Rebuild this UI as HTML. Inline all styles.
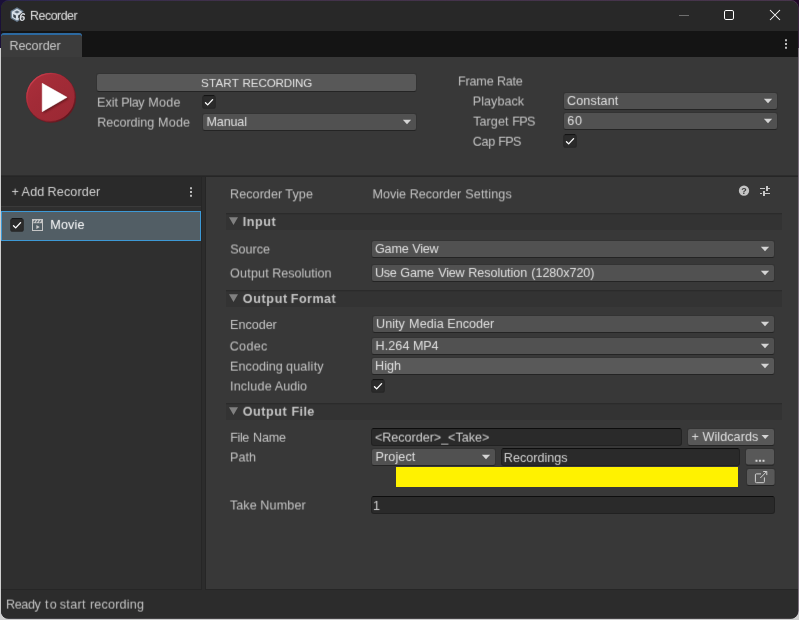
<!DOCTYPE html>
<html lang="en">
<head>
<meta charset="utf-8">
<title>Recorder</title>
<style>
html,body{margin:0;padding:0;width:799px;height:620px;overflow:hidden;}
body{width:799px;height:620px;overflow:hidden;position:relative;background:#c9c9c9;font-family:"Liberation Sans",sans-serif;}
#root{position:absolute;left:0;top:0;width:799px;height:620px;overflow:hidden;}
#gfx{position:absolute;left:0;top:0;width:799px;height:620px;display:block;will-change:transform;}
#txt{position:absolute;left:0;top:0;width:799px;height:620px;will-change:transform;}
.tg{position:absolute;left:0;top:0;width:799px;height:620px;}
#flt{position:absolute;left:0;top:0;width:0;height:0;}
.t{position:absolute;white-space:pre;line-height:20px;height:20px;font-size:12.6px;}

</style>
</head>
<body>
<div id="root">
<svg id="flt" width="0" height="0" aria-hidden="true"><defs>
<filter id="fm500" x="0" y="0" width="100%" height="100%" color-interpolation-filters="sRGB"><feConvolveMatrix order="3" kernelMatrix="0.0400 0.4200 0.0400 0.0400 0.4200 0.0400 0.0000 0.0000 0.0000" divisor="1" preserveAlpha="false" edgeMode="none"/></filter>
<filter id="fm375" x="0" y="0" width="100%" height="100%" color-interpolation-filters="sRGB"><feConvolveMatrix order="3" kernelMatrix="0.0300 0.3150 0.0300 0.0500 0.5250 0.0500 0.0000 0.0000 0.0000" divisor="1" preserveAlpha="false" edgeMode="none"/></filter>
<filter id="fm250" x="0" y="0" width="100%" height="100%" color-interpolation-filters="sRGB"><feConvolveMatrix order="3" kernelMatrix="0.0200 0.2100 0.0200 0.0600 0.6300 0.0600 0.0000 0.0000 0.0000" divisor="1" preserveAlpha="false" edgeMode="none"/></filter>
<filter id="fm125" x="0" y="0" width="100%" height="100%" color-interpolation-filters="sRGB"><feConvolveMatrix order="3" kernelMatrix="0.0120 0.1263 0.0120 0.0660 0.6925 0.0660 0.0020 0.0213 0.0020" divisor="1" preserveAlpha="false" edgeMode="none"/></filter>
<filter id="f0" x="0" y="0" width="100%" height="100%" color-interpolation-filters="sRGB"><feConvolveMatrix order="3" kernelMatrix="0.0064 0.0672 0.0064 0.0672 0.7056 0.0672 0.0064 0.0672 0.0064" divisor="1" preserveAlpha="false" edgeMode="none"/></filter>
<filter id="f375" x="0" y="0" width="100%" height="100%" color-interpolation-filters="sRGB"><feConvolveMatrix order="3" kernelMatrix="0.0000 0.0000 0.0000 0.0500 0.5250 0.0500 0.0300 0.3150 0.0300" divisor="1" preserveAlpha="false" edgeMode="none"/></filter>
</defs></svg>
<svg id="gfx" width="799" height="620" viewBox="0 0 799 620">
<defs>
<clipPath id="wc"><rect x="1.0" y="1.0" width="797" height="617.6" rx="7.5"/></clipPath>
<linearGradient id="pg" x1="0" y1="0" x2="1" y2="1"><stop offset="0" stop-color="#ac2f3b"/><stop offset="0.4" stop-color="#a22b37"/><stop offset="1" stop-color="#9a2833"/></linearGradient>
<linearGradient id="ring" x1="0.15" y1="0.15" x2="0.85" y2="0.85"><stop offset="0" stop-color="#cc3e4e" stop-opacity="0.9"/><stop offset="0.45" stop-color="#b03040" stop-opacity="0"/><stop offset="1" stop-color="#5e161d" stop-opacity="0.9"/></linearGradient>
<linearGradient id="bgt" x1="0" y1="0" x2="1" y2="0"><stop offset="0" stop-color="#1a1038"/><stop offset="0.25" stop-color="#1d0a2a"/><stop offset="1" stop-color="#220828"/></linearGradient>
<linearGradient id="bdr" x1="0" y1="0" x2="1" y2="0"><stop offset="0" stop-color="#2e2a52"/><stop offset="0.3" stop-color="#46364e"/><stop offset="1" stop-color="#4c3a50"/></linearGradient>
<filter id="ts" x="-30%" y="-30%" width="160%" height="160%"><feGaussianBlur stdDeviation="1.2"/></filter>
</defs>
<g>
<rect x="0" y="0" width="799" height="620" fill="#cfcfcf"/>
<rect x="0" y="0" width="799" height="48" fill="url(#bgt)"/>
<rect x="1.0" y="0.09999999999999998" width="797.7" height="618.5" rx="8" fill="url(#bdr)" opacity="0.9"/>
<g clip-path="url(#wc)">
<rect x="0" y="0" width="799" height="620" fill="#2c2c2c"/>
<rect x="0" y="0" width="799" height="31" fill="#282828"/>
<rect x="0" y="31" width="799" height="26" fill="#141414"/>
<path d="M1 57 V36 a3 3 0 0 1 3 -3 H79 a3 3 0 0 1 3 3 V57 z" fill="#3c3c3c"/>
<path d="M1 36.4 V36 a3 3 0 0 1 3 -3 H79 a3 3 0 0 1 3 3 V36.4 L80.6 34.9 H2.4 z" fill="#2c69a0"/>
<rect x="0" y="57" width="799" height="118" fill="#383838"/>
<rect x="0" y="177" width="201" height="29" fill="#2a2a2a"/>
<rect x="0" y="206" width="201" height="1" fill="#3a3a3a"/>
<rect x="0" y="207" width="201" height="382" fill="#2f2f2f"/>
<rect x="206" y="177" width="600" height="412" fill="#383838"/>
<rect x="0" y="589" width="799" height="31" fill="#2c2c2c"/>
<rect x="201" y="177" width="1" height="412" fill="#262626"/>
<rect x="205" y="177" width="1" height="412" fill="#262626"/>
<rect x="0" y="589" width="202" height="1" fill="#262626"/>
<rect x="205" y="589" width="600" height="1" fill="#262626"/>
<rect x="0" y="176" width="799" height="1" fill="#262626"/>
<rect x="1" y="211" width="200" height="30" fill="#3d99d6"/>
<rect x="2" y="212" width="198" height="28" fill="#525e65"/>
</g>
<rect x="679" y="15" width="10" height="1" fill="#6e6e6e"/>
<rect x="724.5" y="10.5" width="9" height="9" rx="1.4" fill="none" stroke="#ffffff" stroke-width="1"/>
<path d="M770 10 L780 20 M780 10 L770 20" fill="none" stroke="#ffffff" stroke-width="1.05"/>
<rect x="785" y="39.25" width="2" height="2" fill="#bcbcbc"/>
<rect x="785" y="43" width="2" height="2" fill="#bcbcbc"/>
<rect x="785" y="46.75" width="2" height="2" fill="#bcbcbc"/>
<rect x="190" y="187.25" width="2" height="2" fill="#bcbcbc"/>
<rect x="190" y="191" width="2" height="2" fill="#bcbcbc"/>
<rect x="190" y="194.75" width="2" height="2" fill="#bcbcbc"/>
<g>
<path d="M17 7.2 L23.4 10.9 V18.3 L17 22 L10.6 18.3 V10.9 Z" fill="#66788a"/>
<path d="M17 8.7 L22.1 11.7 V17.6 L17 20.5 L11.9 17.6 V11.7 Z" fill="#d6dee8"/>
<path d="M17 10.4 L19.8 12 L17 13.6 L14.2 12 Z" fill="#5d6c7a"/>
<path d="M13.3 14.1 L15.9 15.6 V18.4 L13.3 16.9 Z" fill="#39424b"/>
<path d="M20.7 14.1 L18.1 15.6 V18.4 L20.7 16.9 Z" fill="#39424b"/>
<text x="19.3" y="21.1" font-family="Liberation Sans, sans-serif" font-weight="700" font-style="italic" font-size="10.6" fill="#dcdfe4" stroke="#262626" stroke-width="1.3" paint-order="stroke" stroke-linejoin="round">6</text>
</g>
<circle cx="51.1" cy="97.8" r="24.9" fill="#6a1a22"/>
<circle cx="50.7" cy="97.3" r="24.4" fill="url(#pg)"/>
<circle cx="50.9" cy="97.5" r="24.1" fill="none" stroke="url(#ring)" stroke-width="1.3"/>
<path d="M43.4 85 L68.4 98.6 L43.4 113.2 Z" fill="#3a0a10" opacity="0.6" filter="url(#ts)"/>
<path d="M42.2 83.3 L67.1 97.3 L42.2 111.7 Z" fill="#ffffff" stroke="#ffffff" stroke-width="0.5" stroke-linejoin="round"/>
<rect x="96" y="73" width="321" height="19" rx="3" fill="#333333"/>
<rect x="97.6" y="91" width="317.8" height="1" fill="#242424"/>
<rect x="97" y="74" width="319" height="17" rx="2" fill="#585858"/>
<rect x="202.2" y="95.2" width="13.6" height="13.6" rx="2.6" fill="#262626"/>
<rect x="203.8" y="95.2" width="10.4" height="1" fill="#101010"/>
<rect x="203.2" y="96.2" width="11.6" height="11.6" rx="1.6" fill="#2b2b2b"/>
<path d="M205.50 102.70 L207.67 104.87 L212.57 99.62" fill="none" stroke="#ffffff" stroke-width="1.35" stroke-linecap="round" stroke-linejoin="round"/>
<rect x="202" y="113" width="215" height="18" rx="3" fill="#333333"/>
<rect x="203.6" y="130" width="211.8" height="1" fill="#242424"/>
<rect x="203" y="114" width="213" height="16" rx="2" fill="#515151"/>
<path d="M402.85 119.8 h8.3 L407 124.2 z" fill="#d4d4d4"/>
<rect x="563" y="92" width="215" height="18" rx="3" fill="#333333"/>
<rect x="564.6" y="109" width="211.8" height="1" fill="#242424"/>
<rect x="564" y="93" width="213" height="16" rx="2" fill="#515151"/>
<path d="M763.85 98.8 h8.3 L768 103.2 z" fill="#d4d4d4"/>
<rect x="563" y="112" width="215" height="18" rx="3" fill="#333333"/>
<rect x="564.6" y="129" width="211.8" height="1" fill="#242424"/>
<rect x="564" y="113" width="213" height="16" rx="2" fill="#515151"/>
<path d="M763.85 118.8 h8.3 L768 123.2 z" fill="#d4d4d4"/>
<rect x="563.2" y="134.2" width="13.6" height="13.6" rx="2.6" fill="#262626"/>
<rect x="564.8" y="134.2" width="10.4" height="1" fill="#101010"/>
<rect x="564.2" y="135.2" width="11.6" height="11.6" rx="1.6" fill="#2b2b2b"/>
<path d="M566.50 141.70 L568.67 143.87 L573.57 138.62" fill="none" stroke="#ffffff" stroke-width="1.35" stroke-linecap="round" stroke-linejoin="round"/>
<rect x="10.2" y="218.2" width="13.6" height="13.6" rx="2.6" fill="#262626"/>
<rect x="11.8" y="218.2" width="10.4" height="1" fill="#101010"/>
<rect x="11.2" y="219.2" width="11.6" height="11.6" rx="1.6" fill="#2b2b2b"/>
<path d="M13.50 225.70 L15.67 227.87 L20.57 222.62" fill="none" stroke="#ffffff" stroke-width="1.35" stroke-linecap="round" stroke-linejoin="round"/>
<rect x="32.5" y="219.5" width="10" height="11" fill="none" stroke="#c6c6c6" stroke-width="1"/>
<rect x="32" y="219" width="11" height="4.2" fill="#c6c6c6"/>
<path d="M33.4 222.3 L35.2 220.3 M36.3 222.3 L38.1 220.3 M39.2 222.3 L41 220.3" fill="none" stroke="#56626a" stroke-width="1.1"/>
<path d="M36.4 225.1 L39.7 227 L36.4 228.9 Z" fill="#cacaca"/>
<circle cx="744" cy="190.65" r="5.15" fill="#c4c4c4"/>
<text x="744" y="194" text-anchor="middle" font-family="Liberation Sans, sans-serif" font-weight="700" font-size="9" fill="#383838">?</text>
<rect x="760" y="188" width="5" height="1" fill="#c8c8c8"/>
<rect x="766" y="186" width="2" height="5" fill="#c8c8c8"/>
<rect x="768" y="188" width="2" height="1" fill="#c8c8c8"/>
<rect x="760" y="193" width="2" height="1" fill="#c8c8c8"/>
<rect x="763" y="191" width="2" height="5" fill="#c8c8c8"/>
<rect x="765" y="193" width="5" height="1" fill="#c8c8c8"/>
<rect x="226" y="213.2" width="556" height="16.8" fill="#333333"/>
<rect x="226" y="213.2" width="556" height="1" fill="#2a2a2a"/>
<path d="M229 217.2 H238 L233.5 224.9 z" fill="#808080"/>
<rect x="226" y="290.2" width="556" height="16.8" fill="#333333"/>
<rect x="226" y="290.2" width="556" height="1" fill="#2a2a2a"/>
<path d="M229 294.2 H238 L233.5 301.9 z" fill="#808080"/>
<rect x="226" y="403.2" width="556" height="16.8" fill="#333333"/>
<rect x="226" y="403.2" width="556" height="1" fill="#2a2a2a"/>
<path d="M229 407.2 H238 L233.5 414.9 z" fill="#808080"/>
<rect x="371" y="240" width="404" height="18" rx="3" fill="#333333"/>
<rect x="372.6" y="257" width="400.8" height="1" fill="#242424"/>
<rect x="372" y="241" width="402" height="16" rx="2" fill="#515151"/>
<path d="M760.85 246.8 h8.3 L765 251.2 z" fill="#d4d4d4"/>
<rect x="371" y="264" width="404" height="18" rx="3" fill="#333333"/>
<rect x="372.6" y="281" width="400.8" height="1" fill="#242424"/>
<rect x="372" y="265" width="402" height="16" rx="2" fill="#515151"/>
<path d="M760.85 270.8 h8.3 L765 275.2 z" fill="#d4d4d4"/>
<rect x="372" y="315" width="403" height="18" rx="3" fill="#333333"/>
<rect x="373.6" y="332" width="399.8" height="1" fill="#242424"/>
<rect x="373" y="316" width="401" height="16" rx="2" fill="#515151"/>
<path d="M760.85 321.8 h8.3 L765 326.2 z" fill="#d4d4d4"/>
<rect x="371" y="337" width="404" height="18" rx="3" fill="#333333"/>
<rect x="372.6" y="354" width="400.8" height="1" fill="#242424"/>
<rect x="372" y="338" width="402" height="16" rx="2" fill="#515151"/>
<path d="M760.85 343.8 h8.3 L765 348.2 z" fill="#d4d4d4"/>
<rect x="371" y="357" width="404" height="18" rx="3" fill="#333333"/>
<rect x="372.6" y="374" width="400.8" height="1" fill="#242424"/>
<rect x="372" y="358" width="402" height="16" rx="2" fill="#595959"/>
<path d="M760.85 363.8 h8.3 L765 368.2 z" fill="#d4d4d4"/>
<rect x="371.2" y="379.2" width="13.6" height="13.6" rx="2.6" fill="#262626"/>
<rect x="372.8" y="379.2" width="10.4" height="1" fill="#101010"/>
<rect x="372.2" y="380.2" width="11.6" height="11.6" rx="1.6" fill="#2b2b2b"/>
<path d="M374.50 386.70 L376.67 388.87 L381.57 383.62" fill="none" stroke="#ffffff" stroke-width="1.35" stroke-linecap="round" stroke-linejoin="round"/>
<rect x="371" y="428" width="311" height="18" rx="3" fill="#212121"/>
<rect x="372.6" y="428" width="307.8" height="1" fill="#0d0d0d"/>
<rect x="372" y="429" width="309" height="16" rx="2" fill="#2a2a2a"/>
<rect x="687" y="428" width="88" height="18" rx="3" fill="#333333"/>
<rect x="688.6" y="445" width="84.8" height="1" fill="#242424"/>
<rect x="688" y="429" width="86" height="16" rx="2" fill="#585858"/>
<path d="M761.5 434.95 h7.4 L765.2 439.05 z" fill="#d4d4d4"/>
<rect x="371" y="448" width="125" height="18" rx="3" fill="#333333"/>
<rect x="372.6" y="465" width="121.8" height="1" fill="#242424"/>
<rect x="372" y="449" width="123" height="16" rx="2" fill="#515151"/>
<path d="M481.85 454.8 h8.3 L486 459.2 z" fill="#d4d4d4"/>
<rect x="501" y="448" width="239" height="18" rx="3" fill="#212121"/>
<rect x="502.6" y="448" width="235.8" height="1" fill="#0d0d0d"/>
<rect x="502" y="449" width="237" height="16" rx="2" fill="#2a2a2a"/>
<rect x="745" y="448" width="30" height="17.6" rx="3" fill="#333333"/>
<rect x="746.6" y="464.6" width="26.8" height="1" fill="#242424"/>
<rect x="746" y="449" width="28" height="15.6" rx="2" fill="#585858"/>
<rect x="396" y="467" width="342" height="20" fill="#fff200"/>
<rect x="746" y="468" width="29.6" height="18" rx="3" fill="#333333"/>
<rect x="747.6" y="485" width="26.4" height="1" fill="#242424"/>
<rect x="747" y="469" width="27.6" height="16" rx="2" fill="#585858"/>
<g fill="none" stroke="#d2d2d2" stroke-width="1" stroke-linejoin="round">
<path d="M761 473.9 H756.4 a1 1 0 0 0 -1 1 V481.7 a1 1 0 0 0 1 1 H763.4 a1 1 0 0 0 1 -1 V477.4"/>
<path d="M760.3 478 L766.6 471.6 M763.2 471.5 H766.8 V475.1"/>
</g>
<rect x="371" y="496" width="404" height="18" rx="3" fill="#212121"/>
<rect x="372.6" y="496" width="400.8" height="1" fill="#0d0d0d"/>
<rect x="372" y="497" width="402" height="16" rx="2" fill="#2a2a2a"/>
</g>
</svg>

<div id="txt">
<div class="tg" style="filter:url(#fm500)">
<div class="t" id="t_frate_0" style="left:458.06px;top:72px;letter-spacing:-0.19px;color:#c4c4c4;">Frame </div>
<div class="t" id="t_frate_1" style="left:497.04px;top:72px;letter-spacing:-0.257px;color:#c4c4c4;">Rate</div>
<div class="t" id="t_playback" style="left:472.76px;top:92px;letter-spacing:0.032px;color:#c4c4c4;">Playback</div>
<div class="t" id="t_source" style="left:230.21px;top:240px;letter-spacing:-0.04px;color:#c4c4c4;">Source</div>
<div class="t" id="t_outres_0" style="left:230.07px;top:264px;letter-spacing:0.183px;color:#c4c4c4;">Output </div>
<div class="t" id="t_outres_1" style="left:272.2px;top:264px;letter-spacing:-0.014px;color:#c4c4c4;">Resolution</div>
<div class="t" id="t_codec" style="left:229.73px;top:337px;letter-spacing:0.293px;color:#c4c4c4;">Codec</div>
<div class="t" id="t_incaud_0" style="left:230.03px;top:377px;letter-spacing:0.176px;color:#c4c4c4;">Include </div>
<div class="t" id="t_incaud_1" style="left:274.84px;top:377px;letter-spacing:-0.022px;color:#c4c4c4;">Audio</div>
<div class="t" id="t_path" style="left:230.11px;top:448px;letter-spacing:-0.032px;color:#c4c4c4;">Path</div>
<div class="t" id="t_take_0" style="left:229.98px;top:496px;letter-spacing:0.039px;color:#c4c4c4;">Take </div>
<div class="t" id="t_take_1" style="left:260.28px;top:496px;letter-spacing:0.132px;color:#c4c4c4;">Number</div>
</div>
<div class="tg" style="filter:url(#fm375)">
<div class="t" id="t_exit_0" style="left:97.07px;top:93px;letter-spacing:-0.01px;color:#c4c4c4;">Exit </div>
<div class="t" id="t_exit_1" style="left:121.28px;top:93px;letter-spacing:-0.4px;color:#c4c4c4;">Play </div>
<div class="t" id="t_exit_2" style="left:148.29px;top:93px;letter-spacing:0.224px;color:#c4c4c4;">Mode</div>
<div class="t" id="t_recmode_0" style="left:97.2px;top:113px;letter-spacing:-0.039px;color:#c4c4c4;">Recording </div>
<div class="t" id="t_recmode_1" style="left:158.08px;top:113px;letter-spacing:0.167px;color:#c4c4c4;">Mode</div>
<div class="t" id="t_tfps_0" style="left:473.14px;top:112px;letter-spacing:0.079px;color:#c4c4c4;">Target </div>
<div class="t" id="t_tfps_1" style="left:512.32px;top:112px;letter-spacing:-0.709px;color:#c4c4c4;">FPS</div>
<div class="t" id="t_encq_0" style="left:230.1px;top:357px;letter-spacing:0.036px;color:#c4c4c4;">Encoding </div>
<div class="t" id="t_encq_1" style="left:285.92px;top:357px;letter-spacing:0.225px;color:#c4c4c4;">quality</div>
<div class="t" id="t_rectake" style="left:374.98px;top:428px;letter-spacing:-0.034px;color:#d2d2d2;">&lt;Recorder&gt;_&lt;Take&gt;</div>
<div class="t" id="t_status_0" style="left:5.96px;top:595px;letter-spacing:-0.377px;color:#c4c4c4;">Ready </div>
<div class="t" id="t_status_1" style="left:44.91px;top:595px;letter-spacing:1.444px;color:#c4c4c4;">to </div>
<div class="t" id="t_status_2" style="left:59.69px;top:595px;letter-spacing:0.352px;color:#c4c4c4;">start </div>
<div class="t" id="t_status_3" style="left:90px;top:595px;letter-spacing:0.177px;color:#c4c4c4;">recording</div>
</div>
<div class="tg" style="filter:url(#fm250)">
<div class="t" id="t_cfps_0" style="left:472.83px;top:132px;letter-spacing:-0.339px;color:#c4c4c4;">Cap </div>
<div class="t" id="t_cfps_1" style="left:498.33px;top:132px;letter-spacing:-0.748px;color:#c4c4c4;">FPS</div>
<div class="t" id="t_outfile_0" style="left:242.77px;top:402px;letter-spacing:0.542px;color:#c4c4c4;font-weight:700;">Output </div>
<div class="t" id="t_outfile_1" style="left:291.56px;top:402px;letter-spacing:0.325px;color:#c4c4c4;font-weight:700;">File</div>
<div class="t" id="t_fname_0" style="left:230.35px;top:428px;letter-spacing:-0.44px;color:#c4c4c4;">File </div>
<div class="t" id="t_fname_1" style="left:253px;top:428px;letter-spacing:-0.18px;color:#c4c4c4;">Name</div>
<div class="t" id="t_dots" style="left:754.82px;top:448px;letter-spacing:-0.041px;color:#e6e6e6;font-weight:700;">...</div>
</div>
<div class="tg" style="filter:url(#fm125)">
<div class="t" id="t_title" style="left:30.11px;top:6px;letter-spacing:-0.498px;color:#e2e2e2;font-size:12.4px;">Recorder</div>
</div>
<div class="tg" style="filter:url(#f0)">
<div class="t" id="t_tab" style="left:9.41px;top:36px;letter-spacing:-0.066px;color:#c8c8c8;">Recorder</div>
<div class="t" id="t_start_0" style="left:200.99px;top:73px;letter-spacing:0.232px;color:#e6e6e6;font-size:11.6px;">START </div>
<div class="t" id="t_start_1" style="left:242.6px;top:73px;letter-spacing:-0.141px;color:#e6e6e6;font-size:11.6px;">RECORDING</div>
<div class="t" id="t_manual" style="left:206.48px;top:112px;letter-spacing:-0.164px;color:#e0e0e0;">Manual</div>
<div class="t" id="t_constant" style="left:566.89px;top:91px;letter-spacing:0.156px;color:#e0e0e0;">Constant</div>
<div class="t" id="t_60" style="left:567.3px;top:111px;letter-spacing:0.727px;color:#e0e0e0;">60</div>
<div class="t" id="t_add_0" style="left:11.6px;top:182px;color:#d2d2d2;">+ </div>
<div class="t" id="t_add_1" style="left:21.6px;top:182px;letter-spacing:0.159px;color:#d2d2d2;">Add </div>
<div class="t" id="t_add_2" style="left:47.55px;top:182px;letter-spacing:0.123px;color:#d2d2d2;">Recorder</div>
<div class="t" id="t_movie" style="left:50.26px;top:215px;letter-spacing:0.164px;color:#ffffff;">Movie</div>
<div class="t" id="t_input" style="left:242.74px;top:212px;letter-spacing:0.526px;color:#c4c4c4;font-weight:700;">Input</div>
<div class="t" id="t_gameview_0" style="left:375.04px;top:239px;letter-spacing:-0.228px;color:#e0e0e0;">Game </div>
<div class="t" id="t_gameview_1" style="left:412.31px;top:239px;letter-spacing:-0.253px;color:#e0e0e0;">View</div>
<div class="t" id="t_usegame_0" style="left:375.12px;top:263px;letter-spacing:-0.393px;color:#e0e0e0;">Use </div>
<div class="t" id="t_usegame_1" style="left:400.27px;top:263px;letter-spacing:-0.165px;color:#e0e0e0;">Game </div>
<div class="t" id="t_usegame_2" style="left:438.16px;top:263px;letter-spacing:-0.179px;color:#e0e0e0;">View </div>
<div class="t" id="t_usegame_3" style="left:468.19px;top:263px;letter-spacing:-0.049px;color:#e0e0e0;">Resolution </div>
<div class="t" id="t_usegame_4" style="left:531.33px;top:263px;letter-spacing:-0.065px;color:#e0e0e0;">(1280x720)</div>
<div class="t" id="t_outfmt_0" style="left:242.71px;top:289px;letter-spacing:0.65px;color:#c4c4c4;font-weight:700;">Output </div>
<div class="t" id="t_outfmt_1" style="left:290.75px;top:289px;letter-spacing:0.465px;color:#c4c4c4;font-weight:700;">Format</div>
<div class="t" id="t_encoder" style="left:230.08px;top:315px;letter-spacing:-0.028px;color:#c4c4c4;">Encoder</div>
<div class="t" id="t_ume_0" style="left:376.09px;top:314px;letter-spacing:0.026px;color:#e0e0e0;">Unity </div>
<div class="t" id="t_ume_1" style="left:409.1px;top:314px;letter-spacing:0.084px;color:#e0e0e0;">Media </div>
<div class="t" id="t_ume_2" style="left:447.24px;top:314px;letter-spacing:-0.004px;color:#e0e0e0;">Encoder</div>
<div class="t" id="t_h264_0" style="left:375.62px;top:336px;letter-spacing:0.05px;color:#e0e0e0;">H.264 </div>
<div class="t" id="t_h264_1" style="left:413.1px;top:336px;letter-spacing:-0.255px;color:#e0e0e0;">MP4</div>
<div class="t" id="t_high" style="left:375.03px;top:356px;letter-spacing:0.04px;color:#e0e0e0;">High</div>
<div class="t" id="t_wild_0" style="left:691.56px;top:427px;color:#e0e0e0;">+ </div>
<div class="t" id="t_wild_1" style="left:702.44px;top:427px;letter-spacing:0.073px;color:#e0e0e0;">Wildcards</div>
<div class="t" id="t_project" style="left:375.48px;top:447px;letter-spacing:0.104px;color:#e0e0e0;">Project</div>
<div class="t" id="t_recordings" style="left:503.79px;top:448px;letter-spacing:0.006px;color:#d2d2d2;">Recordings</div>
<div class="t" id="t_1" style="left:373.05px;top:496px;color:#d2d2d2;">1</div>
</div>
<div class="tg" style="filter:url(#f375)">
<div class="t" id="t_rtype_0" style="left:230.1px;top:184px;letter-spacing:0.033px;color:#c4c4c4;">Recorder </div>
<div class="t" id="t_rtype_1" style="left:285.3px;top:184px;letter-spacing:0.131px;color:#c4c4c4;">Type</div>
<div class="t" id="t_mrs_0" style="left:372.62px;top:184px;letter-spacing:-0.058px;color:#c4c4c4;">Movie </div>
<div class="t" id="t_mrs_1" style="left:409.77px;top:184px;letter-spacing:-0.064px;color:#c4c4c4;">Recorder </div>
<div class="t" id="t_mrs_2" style="left:465.17px;top:184px;letter-spacing:0.165px;color:#c4c4c4;">Settings</div>
</div>
</div>
</div>
</body>
</html>
